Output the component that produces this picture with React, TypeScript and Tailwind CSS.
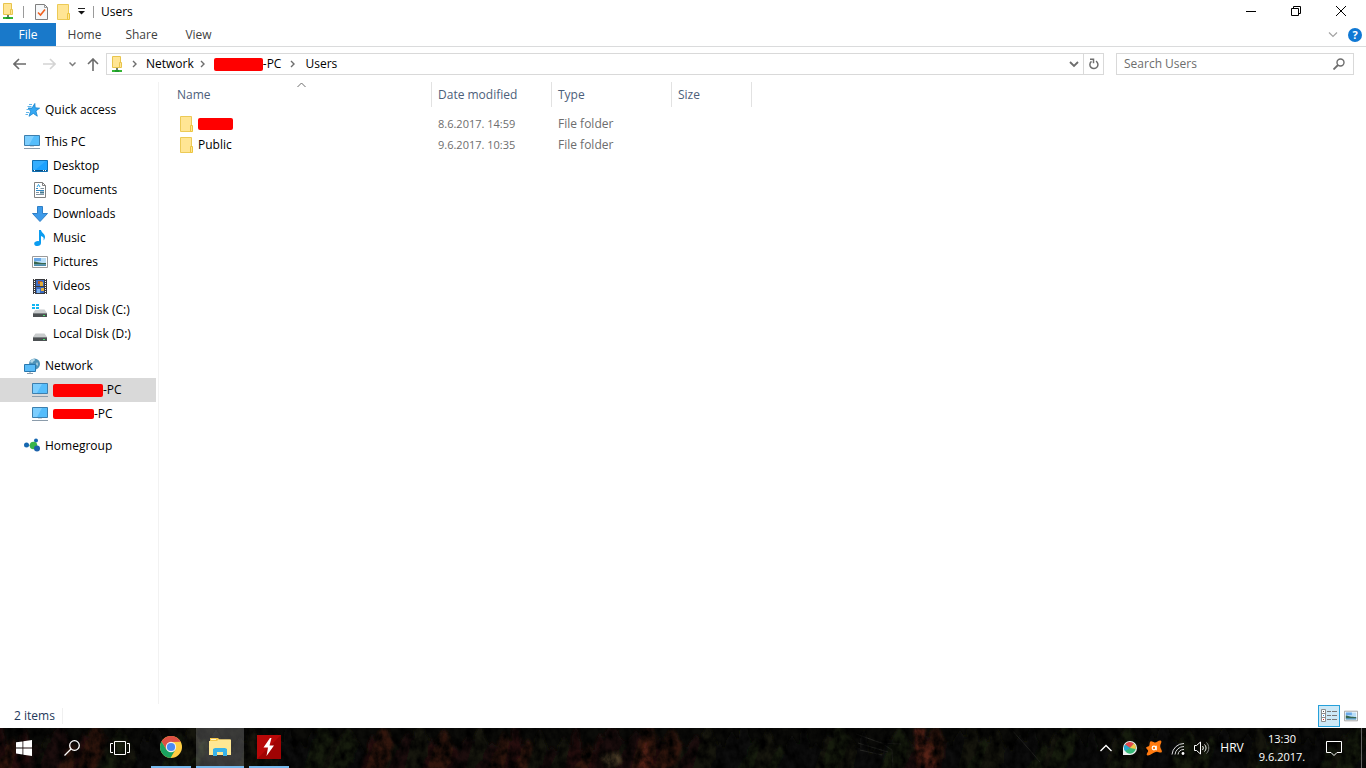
import React from "react";
import clsx from "clsx";

type IconProps = { className?: string };

const FolderIcon = ({ className }: IconProps) => (
  <svg width="14" height="16" viewBox="0 0 14 16" className={clsx("shrink-0", className)}>
    <path d="M.5.5h11v15H.5z" fill="#ffe594" stroke="#ecca56" />
    <path d="M10.5 9.5h2v6h-2z" fill="#ffe594" stroke="#ecc53f" />
  </svg>
);

const NetFolderIcon = () => (
  <svg width="12" height="17" viewBox="0 0 12 17" className="shrink-0">
    <path d="M1.500.5h8v11h-8z" fill="#ffe594" stroke="#e8c44c" />
    <path d="M8.500 6.500h2v5h-2z" fill="#ffe594" stroke="#e8c44c" />
    <path d="M5 12h2v2H5z" fill="#6b7d6b" />
    <path d="M1 14h10v2H1z" fill="#35b535" />
    <path d="M4 14h4v2H4z" fill="#1f9a2c" />
  </svg>
);

const PropertiesIcon = () => (
  <svg width="13" height="16" viewBox="0 0 13 16" className="shrink-0">
    <path d="M.5.5h9l3 3v12H.5z" fill="#f5f7f9" stroke="#7f7f7f" />
    <path d="M9.500.5v3h3" fill="none" stroke="#9a9a9a" />
    <path d="M3 8.500l2.500 2.500L10 5.500" fill="none" stroke="#f0601e" strokeWidth="1.600" />
  </svg>
);

const StarIcon = () => (
  <svg width="16" height="16" viewBox="0 0 16 16">
    <path d="M10.800 1.500l.4 4.300 4.400.4-3.700 2.700 1.400 5.300-4-2.800-4.300 2.900 1.600-5L4.200 6l3.800.1z" fill="#35a8f3" stroke="#1583cd" strokeWidth=".8" />
    <path d="M5 2.500h3M3.500 4.500h4M2.500 7.500h3M2 10.500h3M1.500 12.500h2.500" stroke="#61b5ea" strokeWidth="1" />
  </svg>
);

const PcIcon = () => (
  <svg width="16" height="16" viewBox="0 0 16 16">
    <path d="M.5 1.500h15v10H.5z" fill="#55bdfb" stroke="#3d7fae" />
    <path d="M1 2h9L5 11H1z" fill="#8fd6ff" opacity=".7" />
    <path d="M6 12h4v1H6z" fill="#cfd6dc" />
    <path d="M0 14.500h16" stroke="#8b9cab" />
  </svg>
);

const DesktopIcon = () => (
  <svg width="16" height="16" viewBox="0 0 16 16">
    <path d="M.5 2.500h15v11H.5z" fill="#1ca2ff" stroke="#0f6fb3" />
    <path d="M1 3h13L3 12H1z" fill="#44b5ff" opacity=".6" />
    <path d="M1 12.500h14" stroke="#0b4f80" />
    <path d="M2 12.500h1M11 12.500h1M13 12.500h1" stroke="#fff" />
  </svg>
);

const DocumentIcon = () => (
  <svg width="16" height="16" viewBox="0 0 16 16">
    <path d="M2.500.5h8l3 3v12h-11z" fill="#fff" stroke="#808080" />
    <path d="M10.500.5v3h3" fill="none" stroke="#808080" />
    <path d="M4 6.500h2M4 8.500h8M8 10.500h4" stroke="#2f87c4" />
    <path d="M5 5l1.500-2.500L8 5" fill="none" stroke="#2ba3e5" />
    <path d="M8.500 6.500H12M4 10.500h3M4 12.500h8" stroke="#8293a0" />
    <path d="M8 9.500h4v2H8z" fill="#46788f" />
  </svg>
);

const DownloadIcon = () => (
  <svg width="16" height="16" viewBox="0 0 16 16">
    <path d="M5.500.5h5v7h5L8 15.500.5 7.500h5z" fill="#3d9bea" stroke="#2f7fc6" />
  </svg>
);

const MusicIcon = () => (
  <svg width="16" height="16" viewBox="0 0 16 16">
    <path d="M7 0h2c.3 2.800 4.500 4 4 7.500-.2 1.300-.8 2.200-1.500 3C12.200 8 11.500 6.800 9 6v7c0 1.800-1.500 3-3.500 3S2 15 2.200 13.400C2.500 11.700 4.800 10.700 7 11.200z" fill="#0b9cf0" />
  </svg>
);

const PictureIcon = ({ className }: IconProps) => (
  <svg width="16" height="16" viewBox="0 0 16 16" className={className}>
    <path d="M.5 2.500h15v11H.5z" fill="#fff" stroke="#9a9a9a" />
    <path d="M2 4h12v8H2z" fill="#b9def8" />
    <path d="M2 4h7v3H2z" fill="#6aa8e8" />
    <path d="M2 7.500c3 0 5 2 12 1.500v1.500H2z" fill="#38664e" />
    <path d="M2 10.500h12V12H2z" fill="#4a8cae" />
  </svg>
);

const VideoIcon = () => (
  <svg width="16" height="16" viewBox="0 0 16 16">
    <path d="M1 1h14v15H1z" fill="#3a3a3e" />
    <path d="M2.500 1v15M13.500 1v15" stroke="#fff" strokeDasharray="1 1" />
    <path d="M4 2h8v6H4zM4 9h8v6H4z" fill="#3b6cc4" />
    <path d="M6 3h4v3H6z" fill="#b35a2b" />
    <path d="M8 4h3v4H8zM9 10h3v3H9z" fill="#e3ad37" />
    <path d="M5 11h3v4H5z" fill="#7fb4ed" />
  </svg>
);

const DiskIcon = ({ system }: { system?: boolean }) => (
  <svg width="16" height="16" viewBox="0 0 16 16">
    <path d="M3.500 7.500h9L15 11H1z" fill="#c9cccd" />
    <path d="M1 11h14v4H1z" fill="#4c5052" />
    <path d="M1 11.500h14" stroke="#7b8082" />
    <path d="M11 13h2v1h-2z" fill="#4be26e" />
    {system && (
      <>
        <path d="M0 2h7v6H0z" fill="#fff" />
        <path d="M0 2h3v2H0zM4 2h3v2H4zM0 5h3v2H0zM4 5h3v2H4z" fill="#12b6f3" />
      </>
    )}
  </svg>
);

const NetworkIcon = () => (
  <svg width="16" height="16" viewBox="0 0 16 16">
    <circle cx="10.500" cy="6" r="5.500" fill="#4f93b8" />
    <path d="M7 2c2-1.500 4-1 4 0s-2 1-2 2-2 1-3 0zM13 4c1 1 1 3 .5 4L12 6z" fill="#b5d8e8" />
    <path d="M.5 6.500h11v7H.5z" fill="#5abcf8" stroke="#2877ae" />
    <path d="M6 14v1M3 15.500h6" stroke="#8b9cab" />
  </svg>
);

const HomegroupIcon = () => (
  <svg width="16" height="16" viewBox="0 0 16 16">
    <path d="M3 7l7 1 2-5M10 8l3 4" stroke="#9fb9c8" fill="none" />
    <circle cx="2.500" cy="7" r="2.500" fill="#1567b0" />
    <circle cx="12" cy="2.500" r="2" fill="#1567b0" />
    <circle cx="9.500" cy="7.500" r="3.800" fill="#39b54a" />
    <circle cx="13" cy="10.500" r="3" fill="#1c62ab" />
  </svg>
);

const Chevron = ({ className }: IconProps) => (
  <svg width="6" height="8" viewBox="0 0 6 8" fill="none" className={clsx("shrink-0", className)}>
    <path d="M1 1l3 3-3 3" stroke="#6d6d6d" strokeWidth="1.400" />
  </svg>
);

const Redacted = ({ className }: IconProps) => (
  <span className={clsx("inline-block shrink-0 rounded-xs bg-[#ff0000]", className)} />
);

const TitleBar = () => (
  <header className="flex h-[23px] items-center">
    <div className="flex flex-1 items-center pl-[2px]">
      <NetFolderIcon />
      <span className="ml-[9px] h-3 w-px bg-[#9a9a9a]" />
      <button aria-label="Properties" className="ml-[11px]">
        <PropertiesIcon />
      </button>
      <button aria-label="New folder" className="ml-[9px]">
        <FolderIcon />
      </button>
      <button aria-label="Customize Quick Access Toolbar" className="ml-[7px]">
        <svg width="7" height="7" viewBox="0 0 7 7">
          <path d="M0 .5h7" stroke="#222" />
          <path d="M0 3h7L3.500 6.500z" fill="#111" />
        </svg>
      </button>
      <span className="ml-2 h-3 w-px bg-[#9a9a9a]" />
      <h1 className="ml-[7px]">Users</h1>
    </div>
    <div className="flex items-center pr-[2px] pb-[2px]">
      <button aria-label="Minimize" className="flex h-5 w-[46px] items-center justify-center">
        <svg width="10" height="10"><path d="M0 5.500h10" stroke="#000" /></svg>
      </button>
      <button aria-label="Restore" className="flex h-5 w-[44px] items-center justify-center">
        <svg width="10" height="10" fill="none" stroke="#000">
          <path d="M.5 2.500h7v7h-7zM2.500 2V.5h7v7H8" />
        </svg>
      </button>
      <button aria-label="Close" className="flex h-5 w-[46px] items-center justify-center">
        <svg width="10" height="10" stroke="#000"><path d="M0 0l10 10M10 0L0 10" /></svg>
      </button>
    </div>
  </header>
);

const tabs = ["Home", "Share", "View"];

const Ribbon = () => (
  <nav className="flex h-6 items-stretch border-b border-[#dadbdc] text-[#3f3f3f]">
    <button className="w-14 bg-[#1979ca] text-white">File</button>
    {tabs.map((tab) => (
      <button key={tab} className="w-[57px]">{tab}</button>
    ))}
    <div className="ml-auto flex items-center gap-[10px] pr-1">
      <button aria-label="Expand the Ribbon">
        <svg width="10" height="6" fill="none"><path d="M1 .5l4 4 4-4" stroke="#a3a3a3" strokeWidth="1.200" /></svg>
      </button>
      <button aria-label="Help" className="flex size-[14px] items-center justify-center rounded-full bg-[#0f78d4] text-[11px] leading-none font-bold text-white">
        ?
      </button>
    </div>
  </nav>
);

const AddressBar = () => (
  <div className="mb-px flex h-[34px] items-center pr-3">
    <div className="flex w-[106px] items-center pl-[13px]">
      <button aria-label="Back">
        <svg width="13" height="12" fill="none" stroke="#6b6b6b" strokeWidth="1.600"><path d="M13 6H1M6 1L1 6l5 5" /></svg>
      </button>
      <button aria-label="Forward" className="ml-[17px]">
        <svg width="13" height="12" fill="none" stroke="#d4d4d4" strokeWidth="1.600"><path d="M0 6h12M7 1l5 5-5 5" /></svg>
      </button>
      <button aria-label="Recent locations" className="ml-[13px]">
        <svg width="7" height="5" fill="none"><path d="M.5.5l3 3 3-3" stroke="#7c7c7c" strokeWidth="1.500" /></svg>
      </button>
      <button aria-label="Up" className="ml-[11px]">
        <svg width="12" height="13" fill="none" stroke="#6b6b6b" strokeWidth="1.600"><path d="M6 13V1M1 6l5-5 5 5" /></svg>
      </button>
    </div>
    <div className="flex h-[22px] flex-1 items-center border border-[#d9d9d9] pl-1">
      <NetFolderIcon />
      <Chevron className="ml-[9px]" />
      <a href="#network" className="ml-2">Network</a>
      <Chevron className="ml-[6px]" />
      <a href="#pc" className="ml-2 flex items-center">
        <Redacted className="h-[13px] w-[49px]" />
        -PC
      </a>
      <Chevron className="ml-[9px]" />
      <a href="#users" className="ml-[9px]">Users</a>
      <button aria-label="Previous locations" className="ml-auto px-1">
        <svg width="10" height="7" fill="none"><path d="M1 1l4 4 4-4" stroke="#6d6d6d" strokeWidth="1.800" /></svg>
      </button>
      <button aria-label="Refresh" className="flex h-full w-5 items-center justify-center border-l border-[#d9d9d9]">
        <svg width="10" height="12" fill="none" stroke="#6d6d6d" strokeWidth="1.500">
          <path d="M7 3.200A4 4 0 1 1 2.500 3.400M1 1.200h3.500v4" />
        </svg>
      </button>
    </div>
    <label className="ml-3 flex h-[22px] w-[238px] items-center border border-[#d9d9d9] pr-2 pl-[7px]">
      <input type="text" aria-label="Search Users" placeholder="Search Users" className="min-w-0 flex-1 outline-none placeholder:text-[#6d6d6d]" />
      <svg width="12" height="12" fill="none" stroke="#6d6d6d" strokeWidth="1.400">
        <circle cx="7.500" cy="4.500" r="3.500" />
        <path d="M5 7L.5 11.500" strokeWidth="1.800" />
      </svg>
    </label>
  </div>
);

type NavEntry = {
  icon: React.ReactNode;
  label: string;
  redacted?: string;
  selected?: boolean;
};

const groups: { root: NavEntry; children: NavEntry[] }[] = [
  { root: { icon: <StarIcon />, label: "Quick access" }, children: [] },
  {
    root: { icon: <PcIcon />, label: "This PC" },
    children: [
      { icon: <DesktopIcon />, label: "Desktop" },
      { icon: <DocumentIcon />, label: "Documents" },
      { icon: <DownloadIcon />, label: "Downloads" },
      { icon: <MusicIcon />, label: "Music" },
      { icon: <PictureIcon />, label: "Pictures" },
      { icon: <VideoIcon />, label: "Videos" },
      { icon: <DiskIcon system />, label: "Local Disk (C:)" },
      { icon: <DiskIcon />, label: "Local Disk (D:)" },
    ],
  },
  {
    root: { icon: <NetworkIcon />, label: "Network" },
    children: [
      { icon: <PcIcon />, label: "-PC", redacted: "h-[13px] w-[50px]", selected: true },
      { icon: <PcIcon />, label: "-PC", redacted: "h-[10px] w-[41px]" },
    ],
  },
  { root: { icon: <HomegroupIcon />, label: "Homegroup" }, children: [] },
];

const NavItem = ({ entry, child }: { entry: NavEntry; child?: boolean }) => (
  <a
    href="#"
    className={clsx(
      "mr-[2px] flex h-6 items-center gap-[5px] whitespace-nowrap",
      child ? "pl-8" : "pl-6",
      entry.selected && "bg-[#d9d9d9]",
    )}
  >
    {entry.icon}
    <span className="flex items-center">
      {entry.redacted && <Redacted className={entry.redacted} />}
      {entry.label}
    </span>
  </a>
);

const Sidebar = () => (
  <aside className="flex w-[159px] shrink-0 flex-col gap-2 border-r border-[#f2f2f2] pt-4">
    {groups.map(({ root, children }) => (
      <div key={root.label}>
        <NavItem entry={root} />
        {children.map((entry, i) => (
          <NavItem key={i} entry={entry} child />
        ))}
      </div>
    ))}
  </aside>
);

const files = [
  { name: "", modified: "8.6.2017. 14:59", type: "File folder" },
  { name: "Public", modified: "9.6.2017. 10:35", type: "File folder" },
];

const HeadCell = ({ label, className }: { label: string; className: string }) => (
  <th className={clsx("p-0 pb-[6px] text-left font-normal", className)}>
    <div className="flex h-[25px] items-center border-r border-[#e2e2e2]">{label}</div>
  </th>
);

const FileList = () => (
  <main className="flex-1">
    <table className="w-[593px] table-fixed border-collapse">
      <thead className="text-[#4c607a]">
        <tr>
          <th className="w-[273px] p-0 pb-[6px] text-left font-normal" aria-sort="ascending">
            <div className="relative flex h-[25px] items-center border-r border-[#e2e2e2] pl-[18px]">
              Name
              <svg width="9" height="6" fill="none" className="absolute top-0 left-1/2 ml-[2px]">
                <path d="M.5 5l4-4 4 4" stroke="#6d6d6d" />
              </svg>
            </div>
          </th>
          <HeadCell label="Date modified" className="w-[120px] [&>div]:pl-[6px]" />
          <HeadCell label="Type" className="w-[120px] [&>div]:pl-[6px]" />
          <HeadCell label="Size" className="w-20 [&>div]:pl-[6px]" />
        </tr>
      </thead>
      <tbody className="text-[#6d6d6d]">
        {files.map((file) => (
          <tr key={file.modified} className="h-[21px]">
            <td className="p-0 pl-[21px]">
              <a href="#" className="flex items-center gap-1 text-black">
                <FolderIcon />
                {file.name || <Redacted className="h-3 w-[35px]" />}
              </a>
            </td>
            <td className="p-0 pl-[6px] text-[11px]">{file.modified}</td>
            <td className="p-0 pl-[6px]">{file.type}</td>
            <td className="p-0 pl-[6px]" />
          </tr>
        ))}
      </tbody>
    </table>
  </main>
);

const StatusBar = () => (
  <footer className="flex h-6 items-center pl-[14px] text-[#1e395b]">
    <span className="w-[49px] border-r border-[#f0f0f0]">2 items</span>
    <div className="ml-auto flex items-center gap-1 pr-2">
      <button aria-label="Details view" className="flex h-[22px] w-[22px] items-center justify-center border border-[#26a0da] bg-[#cce8f6]">
        <svg width="16" height="14" viewBox="0 0 16 14" className="shrink-0">
          <path d="M.5.500h4v12h-4zM.5 4.500h4M.5 8.500h4" fill="#fff" stroke="#8c8c8c" />
          <path d="M2 2h1v1H2z" fill="#555" />
          <path d="M2 6h1v1H2z" fill="#2b8be0" />
          <path d="M2 10h1v1H2z" fill="#d22" />
          <path d="M6 2.500h4M11 2.500h5M6 6.500h4M11 6.500h5M6 10.500h4M11 10.500h5" stroke="#777" />
        </svg>
      </button>
      <button aria-label="Large icons view">
        <PictureIcon className="h-[14px] w-[14px]" />
      </button>
    </div>
  </footer>
);

// x, width, top and colour of each tree showing through the taskbar
const trees = Array.from({ length: 115 }, (_, i) => {
  const x = i * 12;
  const autumn = (x > 370 && x < 720) || x < 110 || (x > 910 && x < 945);
  const palette = autumn
    ? ["#26110d", "#17130b", "#32150f", "#1d100b"]
    : ["#0d1009", "#15180c", "#0b0d08", "#181a10"];
  return { x, w: 12 + ((i * 7) % 12), top: ((i * 17) % 27) - 8, fill: palette[(i * 5 + (i % 3)) % 4] };
});

const Forest = () => (
  <svg className="absolute inset-0 size-full" viewBox="0 0 1366 40" preserveAspectRatio="none" aria-hidden="true">
    <filter id="needles" x="0" y="0" width="100%" height="100%">
      <feTurbulence type="fractalNoise" baseFrequency="0.12 0.09" numOctaves="4" seed="6" />
      <feColorMatrix values="0 0 0 0 0  0 0 0 0 0  0 0 0 0 0  1.800 0 0 0 -0.500" />
    </filter>
    <filter id="soft">
      <feGaussianBlur stdDeviation="1.500" />
    </filter>
    <rect width="1366" height="40" fill="#0c0c09" />
    <g filter="url(#soft)">
      {trees.map(({ x, w, top, fill }) => (
        <path
          key={x}
          d={`M${x} ${top}l${w / 3} 10h-2l${w / 3} 9h-2L${x + w} 46H${x - w}L${x - w / 2} ${top + 19}h2L${x - w / 3} ${top + 10}z`}
          fill={fill}
        />
      ))}
      <path d="M636 42l10-30 8 30zM914 0h12l-4 12 14 8-6 6 10 14h-22z" fill="#572314" />
      <path d="M600 28l18-4 4 10-14 6z" fill="#4a3a25" />
    </g>
    <path d="M856 6l25 9 20 1M858 15l30 9M893 40l-1-18-12-8M1010 0l18 20 12 14M860 22l22 5" stroke="#33332f" strokeWidth=".7" fill="none" />
    <rect width="1366" height="40" filter="url(#needles)" />
  </svg>
);

const TaskButton = ({ label, state, children }: { label: string; state?: "open" | "active"; children: React.ReactNode }) => (
  <button
    aria-label={label}
    className={clsx("flex h-10 w-12 flex-col items-center", state === "active" && "bg-white/20")}
  >
    <span className="flex flex-1 items-center">{children}</span>
    {state && <span className={clsx("h-[2px] bg-[#76b9ed]", state === "active" ? "w-12" : "w-10")} />}
  </button>
);

const Taskbar = () => (
  <footer className="relative h-10 bg-black text-white">
    <Forest />
    <div className="relative flex h-full items-center">
      <TaskButton label="Start">
        <svg width="16" height="16" viewBox="0 0 16 16" fill="#fff">
          <path d="M0 2.300l6.500-.9v6.100H0zM7.300 1.300L16 0v7.500H7.300zM0 8.400h6.500v6.100L0 13.600zM7.300 8.400H16V16l-8.700-1.300z" />
        </svg>
      </TaskButton>
      <TaskButton label="Search">
        <svg width="16" height="16" viewBox="0 0 16 16" fill="none" stroke="#fff" strokeWidth="1.300">
          <circle cx="10.500" cy="5.500" r="4.800" />
          <path d="M7 9L.5 15.500" />
        </svg>
      </TaskButton>
      <TaskButton label="Task View">
        <svg width="20" height="14" viewBox="0 0 20 14" fill="none" stroke="#fff">
          <path d="M4.500.5h11v13h-11zM3 2.500H.5v9H3M17 2.500h2.500v9H17" />
        </svg>
      </TaskButton>
      <div className="ml-[3px] flex gap-px">
        <TaskButton label="Google Chrome" state="open">
          <svg width="22" height="22" viewBox="0 0 22 22">
            <circle cx="11" cy="11" r="11" fill="#ffcd42" />
            <path d="M1.500 5.500A11 11 0 0 1 20.500 5.500L11 6 6.300 13.600z" fill="#dd5044" />
            <path d="M1.500 5.500A11 11 0 0 0 10.500 22L15.500 13.500 11 16 6.300 13.600z" fill="#1aa260" />
            <path d="M11 6h9.700a11 11 0 0 1-.2-.5L11 5z" fill="#dd5044" />
            <circle cx="11" cy="11" r="5.200" fill="#f1f1f1" />
            <circle cx="11" cy="11" r="4.100" fill="#4a8af4" />
          </svg>
        </TaskButton>
        <TaskButton label="File Explorer" state="active">
          <svg width="22" height="18" viewBox="0 0 22 18">
            <path d="M1 0h8l1.500 1.500H21V17H1z" fill="#f5c74a" />
            <path d="M0 3h8l1.500-1.500H22V17H0z" fill="#ffe793" />
            <path d="M2 1h5v1H2z" fill="#fff5c8" />
            <path d="M4 18v-7l2-1h10l2 1v7h-4v-4H8v4z" fill="#38b2e8" />
          </svg>
        </TaskButton>
        <TaskButton label="Flash" state="open">
          <svg width="24" height="24" viewBox="0 0 24 24">
            <path d="M0 0h24v24H0z" fill="#b80808" />
            <path d="M0 24L24 0v24z" fill="#a00303" />
            <path d="M13 3L6.500 12.500H11L9.500 21 17 10.500h-4.500L14.500 3z" fill="#fff" />
          </svg>
        </TaskButton>
      </div>
      <div className="ml-auto flex h-full items-center">
        <button aria-label="Show hidden icons" className="flex w-6 justify-center">
          <svg width="12" height="8" fill="none"><path d="M.5 7L6 1.500 11.500 7" stroke="#fff" strokeWidth="1.300" /></svg>
        </button>
        <button aria-label="Color tool" className="flex w-6 justify-center">
          <svg width="14" height="14" viewBox="0 0 14 14">
            <path d="M0 7a7 7 0 1 1 7 7H0z" fill="#eef1f0" />
            <circle cx="7" cy="7" r="5.800" fill="#36b878" />
            <path d="M7 7L2 3.500A6 6 0 0 1 11 2.500z" fill="#e5484d" />
            <path d="M7 7l4-4.500a6 6 0 0 1 1.800 5.500z" fill="#f6c445" />
            <path d="M7 7L2 3.500a6 6 0 0 0 0 6.500z" fill="#27a5d0" />
          </svg>
        </button>
        <button aria-label="Avast" className="flex w-6 justify-center">
          <svg width="16" height="16" viewBox="0 0 16 16">
            <path d="M4.200 1.800C5.500.6 7 2.200 8.500 2.500 10.500 2.800 12.500.2 14.500.5c1.500.4.800 2 .2 3.500-.7 1.700-.7 3 .3 5 .8 1.500 1.400 3 .3 3.500-1.400.5-2.800-.8-4.500-.7-3.500.3-6.300 4-9.300 3.700-1.600-.4-.5-2.300.3-3.500.8-1.300 0-2-1-3C-.5 7.500.4 6.800 2 6.500c2.500-.6 1-3.500 2.200-4.700z" fill="#ff7a0f" />
            <circle cx="8" cy="8" r="1.800" fill="none" stroke="#fff" strokeWidth="1.200" />
            <path d="M10.200 5.800v4.500" stroke="#fff" strokeWidth="1.200" />
          </svg>
        </button>
        <button aria-label="Network" className="flex w-6 justify-center">
          <svg width="14" height="14" viewBox="0 0 14 14" fill="none" stroke="#ddd">
            <path d="M1 13.500A12 12 0 0 1 13 2.500M4 13.500a9 9 0 0 1 9-8M7 13.500a6 6 0 0 1 6-5" />
            <circle cx="12" cy="12.500" r="1.400" fill="#fff" stroke="none" />
          </svg>
        </button>
        <button aria-label="Volume" className="flex w-6 justify-center">
          <svg width="16" height="14" viewBox="0 0 16 14" fill="none" stroke="#fff">
            <path d="M.5 4.500h2l4-3.500v12l-4-3.500h-2zM8.500 5c1 1.200 1 2.800 0 4M10.500 3.500c2 2 2 5 0 7" />
            <path d="M12.500 1.500c3 3 3 8 0 11" stroke="#888" />
          </svg>
        </button>
        <button className="w-9">HRV</button>
        <button className="w-16 text-center text-[11px] leading-[18px]">
          13:30
          <br />
          9.6.2017.
        </button>
        <button aria-label="Action Center" className="flex w-10 justify-center">
          <svg width="16" height="16" viewBox="0 0 16 16" fill="none" stroke="#fff">
            <path d="M.5 1.500h15v11H11L8 15.500 5 12.500H.5z" />
          </svg>
        </button>
        <span className="mr-1 ml-[7px] h-full w-px bg-[#606060]" />
      </div>
    </div>
  </footer>
);

export default function App() {
  return (
    <div className="flex min-h-screen flex-col bg-white font-['Open_Sans','Noto_Sans',sans-serif] text-[12px] leading-4 text-black">
      <TitleBar />
      <Ribbon />
      <AddressBar />
      <div className="flex flex-1">
        <Sidebar />
        <FileList />
      </div>
      <StatusBar />
      <Taskbar />
    </div>
  );
}
